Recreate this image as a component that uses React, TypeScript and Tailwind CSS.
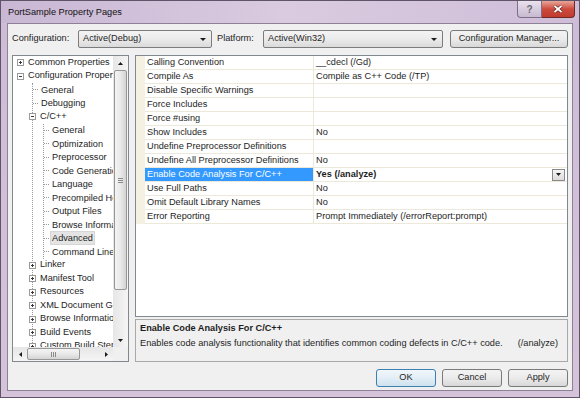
import React from "react";

const props: { name: string; value: string; selected?: boolean }[] = [
  { name: "Calling Convention", value: "__cdecl (/Gd)" },
  { name: "Compile As", value: "Compile as C++ Code (/TP)" },
  { name: "Disable Specific Warnings", value: "" },
  { name: "Force Includes", value: "" },
  { name: "Force #using", value: "" },
  { name: "Show Includes", value: "No" },
  { name: "Undefine Preprocessor Definitions", value: "" },
  { name: "Undefine All Preprocessor Definitions", value: "No" },
  { name: "Enable Code Analysis For C/C++", value: "Yes (/analyze)", selected: true },
  { name: "Use Full Paths", value: "No" },
  { name: "Omit Default Library Names", value: "No" },
  { name: "Error Reporting", value: "Prompt Immediately (/errorReport:prompt)" },
];

const cppChildren = [
  "General",
  "Optimization",
  "Preprocessor",
  "Code Generation",
  "Language",
  "Precompiled Headers",
  "Output Files",
  "Browse Information",
  "Advanced",
  "Command Line",
];

const configChildrenAfter = [
  "Linker",
  "Manifest Tool",
  "Resources",
  "XML Document Generator",
  "Browse Information",
  "Build Events",
  "Custom Build Step",
  "Code Analysis",
];

function Down({ w = 7 }: { w?: number }) {
  return (
    <svg width={w} height={Math.ceil(w / 2)} viewBox={`0 0 ${w} ${Math.ceil(w / 2)}`} className="shrink-0">
      <path d={`M0 0h${w}L${w / 2} ${Math.ceil(w / 2)}z`} fill="#1a1a1a" />
    </svg>
  );
}

function Up() {
  return (
    <svg width="5" height="3" viewBox="0 0 5 3">
      <path d="M0 3h5L2.5 0z" fill="#1a1a1a" />
    </svg>
  );
}

function Left() {
  return (
    <svg width="3" height="5" viewBox="0 0 3 5">
      <path d="M3 0v5L0 2.5z" fill="#1a1a1a" />
    </svg>
  );
}

function Right() {
  return (
    <svg width="3" height="5" viewBox="0 0 3 5">
      <path d="M0 0v5L3 2.5z" fill="#1a1a1a" />
    </svg>
  );
}

function Box({ open }: { open: boolean }) {
  return (
    <svg width="7" height="7" viewBox="0 0 7 7" className="shrink-0">
      <rect x="0.5" y="0.5" width="6" height="6" fill="#fff" stroke="#9a9a9a" />
      <path d="M2 3.5h3" stroke="#3a3a3a" />
      {!open && <path d="M3.5 2v3" stroke="#3a3a3a" />}
    </svg>
  );
}

function Combo({ label, width }: { label: string; width: string }) {
  return (
    <div
      className={`${width} h-[18px] flex items-center pl-[4px] pr-[5px] border border-[#7c7c7c] rounded-[2px] bg-gradient-to-b from-[#f4f4f4] via-[#ebebeb] to-[#dadada]`}
    >
      <span className="flex-1">{label}</span>
      <Down w={6} />
    </div>
  );
}

function Button({ label, primary }: { label: string; primary?: boolean }) {
  return (
    <div
      className={`w-[60px] h-[18px] flex items-center justify-center rounded-[3px] border ${
        primary
          ? "border-[#3c7fb1] bg-gradient-to-b from-[#f1f7fb] via-[#e2eef6] to-[#cfe2ee]"
          : "border-[#7a7a7a] bg-gradient-to-b from-[#f3f3f3] via-[#ebebeb] to-[#d8d8d8]"
      }`}
    >
      {label}
    </div>
  );
}

function Leaf({ label, selected }: { label: string; selected?: boolean }) {
  return (
    <div className="flex items-center h-[13.5px] whitespace-nowrap">
      <span className="w-[5px] shrink-0 border-t border-dotted border-[#9a9a9a]" />
      <span
        className={`ml-[2px] px-[1px] leading-[12px] ${
          selected ? "bg-[#e4e4e4] outline outline-1 outline-[#d6d6d6]" : ""
        }`}
      >
        {label}
      </span>
    </div>
  );
}

function Tree() {
  return (
    <div className="w-[117px] h-full flex flex-col border border-[#828790] bg-white">
      <div className="flex flex-1 min-h-0">
        <div className="flex-1 min-w-0 overflow-hidden pl-[4px]">
          <div className="flex items-center h-[13.5px] whitespace-nowrap">
            <Box open={false} />
            <span className="ml-[4px]">Common Properties</span>
          </div>
          <div className="flex items-center h-[13.5px] whitespace-nowrap">
            <Box open />
            <span className="ml-[4px]">Configuration Properties</span>
          </div>
          <div className="ml-[15px] border-l border-dotted border-[#9a9a9a]">
            <Leaf label="General" />
            <Leaf label="Debugging" />
            <div className="flex items-center h-[13.5px] whitespace-nowrap">
              <span className="-ml-[4px] flex">
                <Box open />
              </span>
              <span className="ml-[4px]">C/C++</span>
            </div>
            <div className="ml-[10px] border-l border-dotted border-[#9a9a9a]">
              {cppChildren.map((c) => (
                <Leaf key={c} label={c} selected={c === "Advanced"} />
              ))}
            </div>
            {configChildrenAfter.map((c) => (
              <div key={c} className="flex items-center h-[13.5px] whitespace-nowrap">
                <span className="-ml-[4px] flex">
                  <Box open={false} />
                </span>
                <span className="ml-[4px]">{c}</span>
              </div>
            ))}
          </div>
        </div>
        {/* vertical scrollbar */}
        <div className="w-[15px] shrink-0 flex flex-col bg-gradient-to-r from-[#e6e6e6] to-[#f5f5f5]">
          <div className="h-[14px] flex items-center justify-center">
            <Up />
          </div>
          <div className="h-[220px] mx-[1px] rounded-[2px] border border-[#979797] bg-gradient-to-r from-[#f4f4f4] via-[#e9e9e9] to-[#d4d4d4] flex flex-col items-center justify-center gap-[1px]">
            <span className="w-[5px] h-px bg-[#8a8a8a]" />
            <span className="w-[5px] h-px bg-[#8a8a8a]" />
            <span className="w-[5px] h-px bg-[#8a8a8a]" />
          </div>
          <div className="flex-1" />
          <div className="h-[14px] flex items-center justify-center">
            <Down w={5} />
          </div>
        </div>
      </div>
      {/* horizontal scrollbar */}
      <div className="h-[14px] flex shrink-0">
        <div className="flex-1 flex bg-gradient-to-b from-[#e6e6e6] to-[#f5f5f5]">
          <div className="w-[14px] flex items-center justify-center">
            <Left />
          </div>
          <div className="w-[53px] my-[1px] rounded-[2px] border border-[#979797] bg-gradient-to-b from-[#f4f4f4] via-[#e9e9e9] to-[#d4d4d4] flex items-center justify-center gap-[1px]">
            <span className="w-px h-[5px] bg-[#8a8a8a]" />
            <span className="w-px h-[5px] bg-[#8a8a8a]" />
            <span className="w-px h-[5px] bg-[#8a8a8a]" />
          </div>
          <div className="flex-1" />
          <div className="w-[14px] flex items-center justify-center">
            <Right />
          </div>
        </div>
        <div className="w-[15px] bg-[#f0f0f0]" />
      </div>
    </div>
  );
}

function Grid() {
  return (
    <div className="h-[262px] border border-[#828790] bg-white overflow-hidden">
      {props.map((p) => (
        <div key={p.name} className="flex h-[14px]">
          <div className="w-[9px] shrink-0 bg-[#f4f1e3]" />
          <div
            className={`w-[169px] shrink-0 border-b border-r border-[#ece8da] pl-[2px] flex items-center whitespace-nowrap ${
              p.selected ? "bg-[#3399ff] text-white" : ""
            }`}
          >
            {p.name}
          </div>
          <div
            className={`flex-1 border-b border-[#ece8da] pl-[2px] flex items-center whitespace-nowrap ${
              p.selected ? "font-bold" : ""
            }`}
          >
            <span className="flex-1">{p.value}</span>
            {p.selected && (
              <div className="w-[13px] h-[12px] mr-[2px] border border-[#8a8a8a] bg-gradient-to-b from-[#f5f5f5] to-[#dcdcdc] flex items-center justify-center">
                <Down w={5} />
              </div>
            )}
          </div>
        </div>
      ))}
    </div>
  );
}

export default function App() {
  return (
    <div className="w-[580px] h-[398px] flex flex-col overflow-hidden border border-[#5f5468] bg-gradient-to-b from-[#cdbcd6] to-[#d5c3da] font-['Liberation_Sans',Arial,sans-serif] text-[9.2px] text-[#1e1e1e]">
      {/* title bar */}
      <div className="h-[22px] shrink-0 flex items-start bg-gradient-to-r from-[#c9b7d4] via-[#dacbe0] to-[#cfbdd8]">
        <span className="pl-[7px] pt-[5px] text-[9.2px] text-[#111]">PortSample Property Pages</span>
        <div className="ml-auto mr-[4px] flex">
          <div className="w-[25px] h-[17px] rounded-bl-[4px] border border-[#7d6f87] border-t-0 bg-gradient-to-b from-[#eae2ee] via-[#d8cddf] to-[#c7bad0] flex items-center justify-center text-[10px] font-bold text-[#6a6a70]">
            ?
          </div>
          <div className="w-[33px] h-[17px] rounded-br-[4px] border border-[#6e2a24] border-t-0 border-l-0 bg-gradient-to-b from-[#e7a59b] via-[#cc4b3e] to-[#c03b2d] flex items-center justify-center">
            <svg width="10" height="8" viewBox="0 0 10 8">
              <path d="M1.5 1l7 6M8.5 1l-7 6" stroke="#5a1a14" strokeWidth="3" />
              <path d="M1.5 1l7 6M8.5 1l-7 6" stroke="#fff" strokeWidth="1.8" />
            </svg>
          </div>
        </div>
      </div>

      {/* client area */}
      <div className="flex-1 mx-[6px] mb-[6px] flex flex-col bg-[#f0f0f0] border border-[#8e8197] pl-[4px] pr-[4px] pt-[6px]">
        <div className="h-[18px] flex items-center">
          <span className="w-[66px]">Configuration:</span>
          <Combo label="Active(Debug)" width="w-[134px]" />
          <span className="ml-[5px] w-[46px]">Platform:</span>
          <Combo label="Active(Win32)" width="w-[180px]" />
          <div className="ml-[7px] flex-1 h-[18px] flex items-center justify-center rounded-[3px] border border-[#7a7a7a] bg-gradient-to-b from-[#f3f3f3] via-[#ebebeb] to-[#d8d8d8]">
            Configuration Manager...
          </div>
        </div>

        <div className="mt-[7px] h-[307px] flex gap-[6px]">
          <Tree />
          <div className="flex-1 flex flex-col gap-[2px]">
            <Grid />
            <div className="flex-1 border border-[#a9a9a9] bg-[#f0f0f0] pl-[4px] pr-[9px] pt-[2px]">
              <div className="h-[13px] font-bold flex items-center">Enable Code Analysis For C/C++</div>
              <div className="mt-[2px] h-[13px] flex items-center justify-between">
                <span>Enables code analysis functionality that identifies common coding defects in C/C++ code.</span>
                <span>(/analyze)</span>
              </div>
            </div>
          </div>
        </div>

        <div className="mt-[7px] flex justify-end gap-[6px]">
          <Button label="OK" primary />
          <Button label="Cancel" />
          <Button label="Apply" />
        </div>
      </div>
    </div>
  );
}
